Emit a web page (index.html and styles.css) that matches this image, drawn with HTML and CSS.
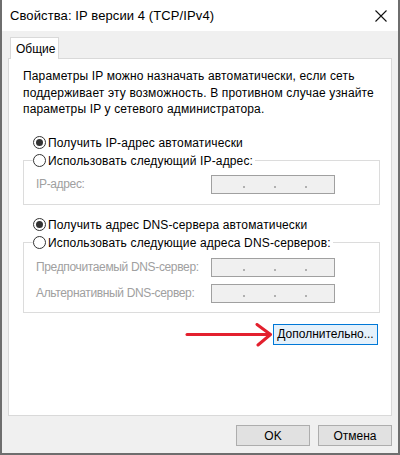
FILE: index.html
```html
<!DOCTYPE html>
<html lang="ru">
<head>
<meta charset="utf-8">
<link rel="stylesheet" href="styles.css">
</head>
<body>
<div class="window">
  <div class="titlebar">
    <span class="title">Свойства: IP версии 4 (TCP/IPv4)</span>
    <svg class="close" width="12" height="12" viewBox="0 0 12 12"><path d="M0.5 0.5 L11.5 11.5 M11.5 0.5 L0.5 11.5" stroke="#111" stroke-width="1.1" fill="none"/></svg>
  </div>
  <div class="client">
    <div class="tabs"><div class="tab">Общие</div></div>
    <div class="panel">
      <p class="desc">Параметры IP можно назначать автоматически, если сеть<br>поддерживает эту возможность. В противном случае узнайте<br>параметры IP у сетевого администратора.</p>

      <div class="radio-row first"><span class="radio checked"></span><span>Получить IP-адрес автоматически</span></div>
      <fieldset class="group g-ip">
        <legend class="radio-row"><span class="radio"></span><span>Использовать следующий IP-адрес:</span></legend>
        <div class="field"><span class="flabel">IP-адрес:</span><span class="ipbox"><i></i><i></i><i></i></span></div>
      </fieldset>

      <div class="radio-row second"><span class="radio checked"></span><span>Получить адрес DNS-сервера автоматически</span></div>
      <fieldset class="group g-dns">
        <legend class="radio-row"><span class="radio"></span><span>Использовать следующие адреса DNS-серверов:</span></legend>
        <div class="field f1"><span class="flabel">Предпочитаемый DNS-сервер:</span><span class="ipbox"><i></i><i></i><i></i></span></div>
        <div class="field f2"><span class="flabel">Альтернативный DNS-сервер:</span><span class="ipbox"><i></i><i></i><i></i></span></div>
      </fieldset>

      <div class="adv-row">
        <button class="btn adv">Дополнительно...</button>
        <svg class="arrow" width="90" height="28" viewBox="0 0 90 28"><path d="M2 11.5 L84 11.5" stroke="#e3202e" stroke-width="3" stroke-linecap="round" fill="none"/><path d="M72 1.5 L85.5 11.5 L73 22" stroke="#e3202e" stroke-width="3" stroke-linecap="round" stroke-linejoin="round" fill="none"/></svg>
      </div>
    </div>
    <div class="footer">
      <button class="btn">OK</button>
      <button class="btn">Отмена</button>
    </div>
  </div>
</div>
</body>
</html>
```
FILE: styles.css
```css
* { box-sizing: border-box; }
html, body { margin: 0; padding: 0; }
body {
  width: 400px;
  height: 455px;
  overflow: hidden;
  font-family: "Liberation Sans", Arial, sans-serif;
  font-size: 12px;
  color: #000;
  background: #f0f0f0;
}
.window {
  width: 400px;
  height: 455px;
  border-left: 2px solid #6e6e6e;
  border-right: 2px solid #6e6e6e;
  border-bottom: 2px solid #6e6e6e;
  background: #f0f0f0;
  display: flex;
  flex-direction: column;
}
.titlebar {
  height: 31px;
  background: #fff;
  display: flex;
  align-items: center;
  justify-content: space-between;
  padding: 0 10px 0 8px;
  font-size: 13px;
  letter-spacing: 0.1px;
}
.close { margin-right: 1px; }
.client {
  flex: 1;
  padding: 6px 6px 0 6px;
  display: flex;
  flex-direction: column;
}
.tabs { display: flex; height: 21px; padding-left: 2px; }
.tab {
  width: 49px;
  height: 22px;
  background: #fff;
  border: 1px solid #d9d9d9;
  border-bottom: none;
  padding: 4px 0 0 5px;
  position: relative;
  z-index: 1;
}
.panel {
  height: 358px;
  background: #fff;
  border: 1px solid #d9d9d9;
  padding: 9px 10px 0 14px;
  position: relative;
  letter-spacing: 0.15px;
}
.desc {
  margin: 0;
  line-height: 16.5px;
  white-space: nowrap;
}
.radio-row {
  display: flex;
  align-items: center;
  height: 18px;
  padding-left: 10px;
  white-space: nowrap;
}
.radio {
  width: 13px;
  height: 13px;
  border: 1px solid #333;
  border-radius: 50%;
  margin-right: 2px;
  display: flex;
  align-items: center;
  justify-content: center;
  background: #fff;
  flex-shrink: 0;
}
.radio.checked::after {
  content: "";
  width: 7px;
  height: 7px;
  border-radius: 50%;
  background: #333;
}
.first { margin-top: 16px; }
.group {
  margin: 0;
  border: 1px solid #dcdcdc;
  padding: 0 0 0 12px;
  width: 357px;
}
.group legend {
  padding: 0 2px 0 0;
  margin-left: -3px;
}
.group legend.radio-row { padding-left: 0; }
.g-ip { height: 53px; margin-top: 0; }
.g-dns { height: 79px; margin-top: 0; }
.field {
  display: flex;
  align-items: center;
  justify-content: space-between;
  width: 299px;
  margin-top: 5px;
  white-space: nowrap;
}
.f1 { margin-top: 6px; }
.f2 { margin-top: 7px; }
.flabel { color: #a0a0a0; letter-spacing: -0.35px; }
.ipbox {
  width: 124px;
  height: 19px;
  border: 1px solid #a0a0a0;
  background: #f0f0f0;
  display: flex;
  justify-content: center;
  gap: 29px;
  padding-top: 10px;
  padding-left: 4px;
  flex-shrink: 0;
}
.ipbox i {
  width: 2px;
  height: 2px;
  background: #b0b0b0;
}
.second { margin-top: 11px; }
.adv-row {
  display: flex;
  justify-content: flex-end;
  margin-top: 11px;
  padding-right: 3px;
  position: relative;
}
.btn {
  font-family: inherit;
  font-size: 12px;
  color: #000;
  background: #e1e1e1;
  border: 1px solid #adadad;
  width: 74px;
  height: 21px;
  padding: 0;
}
.adv {
  width: 105px;
  background: #e5f1fb;
  border-color: #0078d7;
}
.arrow {
  position: absolute;
  left: 162px;
  top: -1px;
}
.footer {
  display: flex;
  justify-content: flex-end;
  gap: 8px;
  padding: 9px 0 0 0;
}
```
